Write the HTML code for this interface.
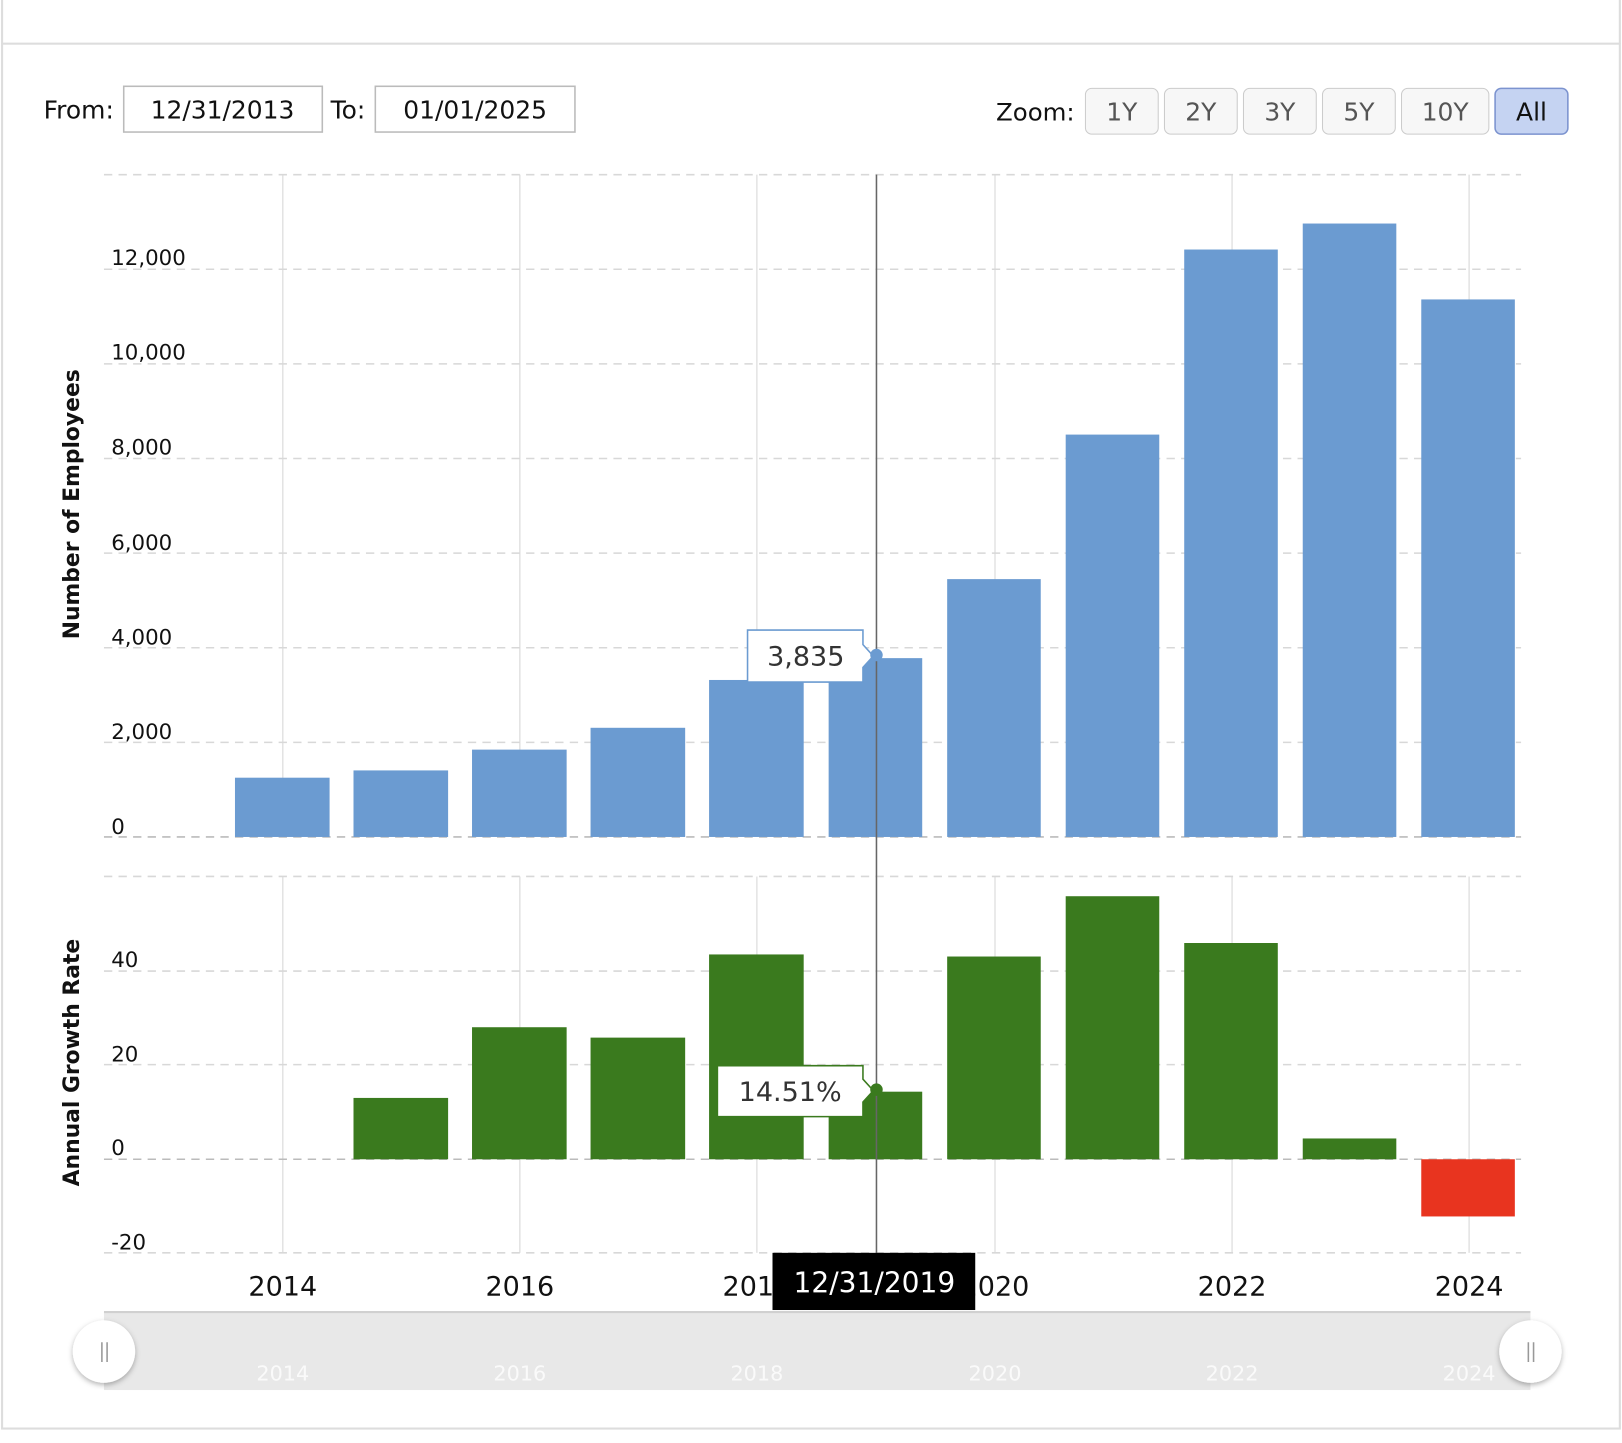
<!DOCTYPE html>
<html><head><meta charset="utf-8"><style>
html,body{margin:0;padding:0;background:#fff;width:1622px;height:1438px;overflow:hidden}
#w{position:absolute;left:0;top:0;width:1560px;height:1383px;transform:scale(1.0397);transform-origin:0 0}
</style></head><body><div id="w">
<svg width="1560" height="1383" xmlns="http://www.w3.org/2000/svg" font-family="DejaVu Sans, sans-serif">
<rect x="2" y="42" width="1556" height="1332" fill="#fff" stroke="#ddd" stroke-width="2"/>
<line x1="2" y1="0" x2="2" y2="42" stroke="#ddd" stroke-width="2"/>
<line x1="1558" y1="0" x2="1558" y2="42" stroke="#ddd" stroke-width="2"/>
<text x="42" y="114" font-size="24" fill="#111">From:</text>
<rect x="119" y="83" width="191" height="44" fill="#fff" stroke="#bbb" stroke-width="1.5"/>
<text x="214" y="114" font-size="24" text-anchor="middle" fill="#111">12/31/2013</text>
<text x="318" y="114" font-size="24" fill="#111">To:</text>
<rect x="361" y="83" width="192" height="44" fill="#fff" stroke="#bbb" stroke-width="1.5"/>
<text x="457" y="114" font-size="24" text-anchor="middle" fill="#111">01/01/2025</text>
<text x="958" y="116" font-size="23.5" fill="#111">Zoom:</text>
<g font-size="24" text-anchor="middle" fill="#555">
<rect x="1044" y="85" width="70" height="44" rx="6" fill="#f7f7f7" stroke="#ccc"/><text x="1079" y="116">1Y</text>
<rect x="1120" y="85" width="70" height="44" rx="6" fill="#f7f7f7" stroke="#ccc"/><text x="1155" y="116">2Y</text>
<rect x="1196" y="85" width="70" height="44" rx="6" fill="#f7f7f7" stroke="#ccc"/><text x="1231" y="116">3Y</text>
<rect x="1272" y="85" width="70" height="44" rx="6" fill="#f7f7f7" stroke="#ccc"/><text x="1307" y="116">5Y</text>
<rect x="1348" y="85" width="84" height="44" rx="6" fill="#f7f7f7" stroke="#ccc"/><text x="1390" y="116">10Y</text>
<rect x="1438" y="85" width="70" height="44" rx="6" fill="#c5d3f2" stroke="#7c93cf" stroke-width="1.5"/><text x="1473" y="116" fill="#111">All</text>
</g>
<g stroke="#ddd" stroke-width="1.2">
<line x1="272" y1="168" x2="272" y2="805"/><line x1="500" y1="168" x2="500" y2="805"/><line x1="728" y1="168" x2="728" y2="805"/><line x1="957" y1="168" x2="957" y2="805"/><line x1="1185" y1="168" x2="1185" y2="805"/><line x1="1413" y1="168" x2="1413" y2="805"/>
<line x1="272" y1="843" x2="272" y2="1205"/><line x1="500" y1="843" x2="500" y2="1205"/><line x1="728" y1="843" x2="728" y2="1205"/><line x1="957" y1="843" x2="957" y2="1205"/><line x1="1185" y1="843" x2="1185" y2="1205"/><line x1="1413" y1="843" x2="1413" y2="1205"/>
</g>
<g stroke="#d8d8d8" stroke-width="1.5" stroke-dasharray="8,6">
<line x1="100" y1="168" x2="1463" y2="168"/><line x1="100" y1="259" x2="1463" y2="259"/><line x1="100" y1="350" x2="1463" y2="350"/><line x1="100" y1="441" x2="1463" y2="441"/><line x1="100" y1="532" x2="1463" y2="532"/><line x1="100" y1="623" x2="1463" y2="623"/><line x1="100" y1="714" x2="1463" y2="714"/><line x1="100" y1="805" x2="1463" y2="805" stroke="#bbb"/>
<line x1="100" y1="843" x2="1463" y2="843"/><line x1="100" y1="934" x2="1463" y2="934"/><line x1="100" y1="1024" x2="1463" y2="1024"/><line x1="100" y1="1115" x2="1463" y2="1115" stroke="#bbb"/><line x1="100" y1="1205" x2="1463" y2="1205"/>
</g>
<g fill="#6b9bd1">
<rect x="226" y="748" width="91" height="57"/><rect x="340" y="741" width="91" height="64"/><rect x="454" y="721" width="91" height="84"/><rect x="568" y="700" width="91" height="105"/><rect x="682" y="654" width="91" height="151"/><rect x="797" y="633" width="90" height="172"/><rect x="911" y="557" width="90" height="248"/><rect x="1025" y="418" width="90" height="387"/><rect x="1139" y="240" width="90" height="565"/><rect x="1253" y="215" width="90" height="590"/><rect x="1367" y="288" width="90" height="517"/>
</g>
<g fill="#3a7a1e">
<rect x="340" y="1056" width="91" height="59"/><rect x="454" y="988" width="91" height="127"/><rect x="568" y="998" width="91" height="117"/><rect x="682" y="918" width="91" height="197"/><rect x="797" y="1050" width="90" height="65"/><rect x="911" y="920" width="90" height="195"/><rect x="1025" y="862" width="90" height="253"/><rect x="1139" y="907" width="90" height="208"/><rect x="1253" y="1095" width="90" height="20"/>
</g>
<rect x="1367" y="1115" width="90" height="55" fill="#e8341f"/>
<line x1="843" y1="168" x2="843" y2="1205" stroke="#666" stroke-width="1.5"/>
<g font-size="20.5" fill="#111">
<text x="107" y="255">12,000</text><text x="107" y="346">10,000</text><text x="107" y="437">8,000</text><text x="107" y="529">6,000</text><text x="107" y="620">4,000</text><text x="107" y="711">2,000</text><text x="107" y="802">0</text>
<text x="107" y="930">40</text><text x="107" y="1021">20</text><text x="107" y="1111">0</text><text x="107" y="1202">-20</text>
</g>
<text transform="translate(76,485) rotate(-90)" font-size="21" font-weight="bold" text-anchor="middle" fill="#111">Number of Employees</text>
<text transform="translate(76,1022) rotate(-90)" font-size="21" font-weight="bold" text-anchor="middle" fill="#111">Annual Growth Rate</text>
<path d="M719 606 H830 V620 L840 631 L830 642 V656 H719 Z" fill="#fff" stroke="#6b9bd1" stroke-width="1.5"/>
<text x="775" y="640" font-size="26" text-anchor="middle" fill="#333">3,835</text>
<circle cx="843" cy="630" r="6" fill="#6b9bd1"/>
<path d="M690 1025 H830 V1038 L840 1049 L830 1060 V1074 H690 Z" fill="#fff" stroke="#3a7a1e" stroke-width="1.5"/>
<text x="760" y="1059" font-size="26" text-anchor="middle" fill="#333">14.51%</text>
<circle cx="843" cy="1048" r="6" fill="#3a7a1e"/>
<g font-size="26" text-anchor="middle" fill="#111">
<text x="272" y="1246">2014</text><text x="500" y="1246">2016</text><text x="728" y="1246">2018</text><text x="957" y="1246">2020</text><text x="1185" y="1246">2022</text><text x="1413" y="1246">2024</text>
</g>
<rect x="743" y="1205" width="195" height="55" fill="#000"/>
<text x="841" y="1243" font-size="27" text-anchor="middle" fill="#fff">12/31/2019</text>
<rect x="100" y="1262" width="1372" height="75" fill="#e8e8e8"/>
<line x1="100" y1="1262" x2="1472" y2="1262" stroke="#d0d0d0" stroke-width="2"/>
<g font-size="20" text-anchor="middle" fill="#fff" opacity="0.8">
<text x="272" y="1328">2014</text><text x="500" y="1328">2016</text><text x="728" y="1328">2018</text><text x="957" y="1328">2020</text><text x="1185" y="1328">2022</text><text x="1413" y="1328">2024</text>
</g>
<defs><filter id="s"><feDropShadow dx="0" dy="2" stdDeviation="2.5" flood-opacity="0.3"/></filter></defs>
<circle cx="100" cy="1300" r="30" fill="#fff" filter="url(#s)"/>
<circle cx="1472" cy="1300" r="30" fill="#fff" filter="url(#s)"/>
<g stroke="#999" stroke-width="1.5">
<line x1="98" y1="1291" x2="98" y2="1310"/><line x1="103" y1="1291" x2="103" y2="1310"/>
<line x1="1470" y1="1291" x2="1470" y2="1310"/><line x1="1475" y1="1291" x2="1475" y2="1310"/>
</g>
</svg>
</div></body></html>
